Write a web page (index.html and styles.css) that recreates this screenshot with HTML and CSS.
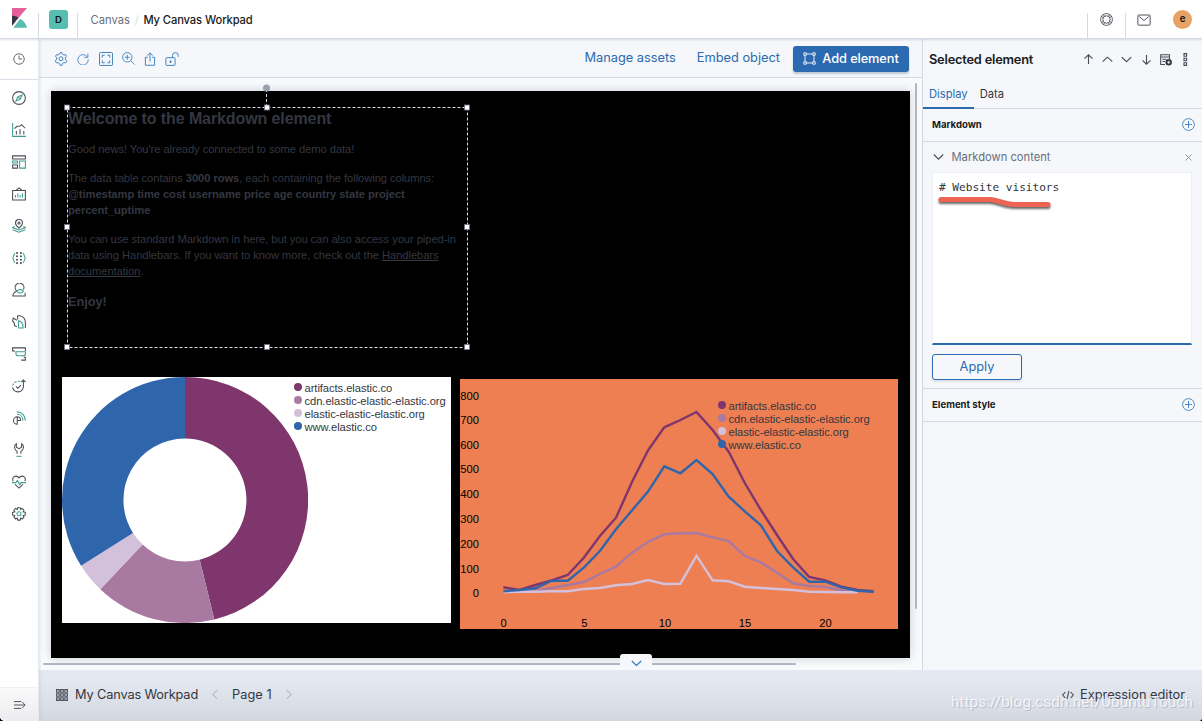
FILE: index.html
```
<!DOCTYPE html>
<html lang="en">

<head>
    <meta charset="UTF-8">
    <title>My Canvas Workpad - Kibana</title>
    <link rel="stylesheet" href="styles.css">
</head>

<body>
    <div class="app">
        <header class="header">
            <a class="logo">
                <svg width="16" height="20" viewBox="0 0 16 20">
                    <path fill="#e5609b" d="M0 0h15L0 17.500z" />
                    <path fill="#343741" d="M0 7.700c2.400 0 4.600.6 6.500 1.800L.4 17.400 0 17.800z" />
                    <path fill="#57bdb1" d="M8.200 10.800L1.300 19.700H15c-.7-3.700-3.400-7-6.800-8.900z" />
                </svg>
            </a>
            <div class="space"><span class="space-badge">D</span></div>
            <nav class="breadcrumbs">
                <span class="crumb">Canvas</span>
                <span class="slash">/</span>
                <span class="crumb current">My Canvas Workpad</span>
            </nav>
            <div class="header-item">
                <svg class="icon" width="13" height="13" viewBox="0 0 16 16">
                    <circle cx="8" cy="8" r="7.300" />
                    <circle cx="8" cy="8" r="4.600" />
                    <path d="M2 4l2.200 2M4 2l2 2.200M14 4l-2.200 2M12 2l-2 2.200M2 12l2.200-2M4 14l2-2.200M14 12l-2.200-2M12 14l-2-2.200" />
                </svg>
            </div>
            <div class="header-item">
                <svg class="icon" width="14" height="12" viewBox="0 0 16 13">
                    <rect x="1" y=".8" width="14" height="11.600" rx="1" />
                    <path d="M2.500 2.500L8 7.200l5.500-4.700" />
                </svg>
            </div>
            <div class="user"><span class="avatar">e</span></div>
        </header>

        <aside class="sidenav">
            <div class="recent">
                <svg class="icon" width="12" height="12" viewBox="0 0 16 16">
                    <circle cx="8" cy="8" r="7" />
                    <path d="M8 3.500V8h4.200" />
                </svg>
            </div>
            <ul class="apps">
                <li>
                    <svg class="icon" viewBox="0 0 16 16">
                        <circle cx="8" cy="8" r="7.300" />
                        <path class="teal" d="M11.500 4.500L9.400 9.400l-4.900 2.100 2.100-4.900zM6.600 6.600l2.800 2.800" />
                    </svg>
                </li>
                <li>
                    <svg class="icon" viewBox="0 0 16 16">
                        <path class="teal" d="M.7 0v15.300H16" />
                        <path d="M2.800 6.500l3-2.700h3L11 2l4 4M5 9v4M9.200 7v6M13.500 9v4" />
                    </svg>
                </li>
                <li>
                    <svg class="icon" viewBox="0 0 16 16">
                        <path d="M.7 1h14.600v3.500H.7zM.7 11.500h5.600v3.500H.7z" />
                        <path class="teal" d="M.7 6.800h5.600v2.400H.7zM8.700 6.800h6.600V15H8.700z" />
                    </svg>
                </li>
                <li>
                    <svg class="icon" viewBox="0 0 16 16">
                        <path d="M.7 4h14.600v10.800H.7zM4.500 4L8 1l3.500 3" />
                        <path class="teal" d="M4 9v3M6.700 7.500V12M9.400 9v3M12 7v5" />
                    </svg>
                </li>
                <li>
                    <svg class="icon" viewBox="0 0 16 16">
                        <path d="M8 10.500C5 8 4 6.400 4 4.600a4 4 0 0 1 8 0c0 1.800-1 3.400-4 5.900z" />
                        <circle cx="8" cy="4.600" r="1.200" />
                        <path class="teal" d="M3 8.600L.6 9.800 8 12.600l7.400-2.800L13 8.600M.8 12.300L8 15.200l7.200-2.900" />
                    </svg>
                </li>
                <li>
                    <svg class="icon" viewBox="0 0 16 16">
                        <path class="teal" d="M3.500 2.500C1.500 3.500 2.500 6 .8 8c1.700 2 .7 4.500 2.700 5.500M12.500 2.500c2 1 1 3.500 2.700 5.500-1.700 2-.7 4.500-2.700 5.500" />
                        <g class="dots">
                            <circle cx="5.800" cy="2.200" r="1.200" /><circle cx="10.200" cy="2.200" r="1.200" />
                            <circle cx="5.800" cy="6" r="1.200" /><circle cx="10.200" cy="6" r="1.200" />
                            <circle cx="5.800" cy="10" r="1.200" /><circle cx="10.200" cy="10" r="1.200" />
                            <circle cx="5.800" cy="13.800" r="1.200" /><circle cx="10.200" cy="13.800" r="1.200" />
                        </g>
                    </svg>
                </li>
                <li>
                    <svg class="icon" viewBox="0 0 16 16">
                        <path d="M5.500 9A5 5 0 1 1 13 7.500M5.300 9.500C2.500 10.500 1.200 12 1 14.800h14V11" />
                        <path class="teal" d="M5.500 9.500c1.800-2.600 6-2.600 7.600 0-1.800 2.600-6 2.600-7.600 0z" />
                    </svg>
                </li>
                <li>
                    <svg class="icon" viewBox="0 0 16 16">
                        <path d="M5.500 13.500L2.800 12V9.500L.7 7 1.500 3.500l4 2.500M6.500 5V.8H9c3.800.8 6.300 4 6.300 8v6" />
                        <path class="teal" d="M7.500 6.500c3 .5 5.200 3.800 5.200 8.300H7.500z" />
                    </svg>
                </li>
                <li>
                    <svg class="icon" viewBox="0 0 16 16">
                        <path d="M3.500 4.500H.7V1h14.600v3.500M10.500 15h4.800v-3.300h-2" />
                        <path class="teal" d="M4.500 5.500h10.800v2.300c0 1.500-1 2.300-2.200 2.300H6.700c-1.200 0-2.200-.8-2.200-2.300z" />
                    </svg>
                </li>
                <li>
                    <svg class="icon" viewBox="0 0 16 16">
                        <path d="M.7 9.500A6.200 6.200 0 0 0 13 9V1.200M10.500 3.600L13 1.100l2.500 2.500M4.500 8.500l2.200 2.200 3.600-3.600" />
                        <path class="teal dashed" d="M.8 7.500A6.400 6.400 0 0 1 9 2.800" />
                    </svg>
                </li>
                <li>
                    <svg class="icon" viewBox="0 0 16 16">
                        <path d="M6 6.500a4.300 4.300 0 1 0 0 8.600zM6 6.500c2.500 0 3.800 1.500 3.800 4.300H6" />
                        <path class="teal" d="M5.500 3.800c4 0 7 3 7 7.400M5.500 1c5.700 0 9.800 4.200 9.800 10.200" />
                    </svg>
                </li>
                <li>
                    <svg class="icon" viewBox="0 0 16 16">
                        <path d="M5.800 12.300V9.500C2.200 7.500 2 2.500 5 .9v4L8 6.500l3-1.600v-4c3 1.600 2.800 6.600-.8 8.600v2.800" />
                        <path class="teal" d="M5 15.200h6" />
                    </svg>
                </li>
                <li>
                    <svg class="icon" viewBox="0 0 16 16">
                        <path d="M1.300 7C-.2 3.500 2 1.300 4.500 1.300 6.300 1.300 7.300 2.300 8 3.300c.7-1 1.700-2 3.500-2 2.500 0 4.700 2.200 3.200 5.700M3.500 10.700L8 15l4.500-4.300" />
                        <path class="teal" d="M0 8.700h4.500L6.200 6l2.600 5.200 1.500-2.500H16" />
                    </svg>
                </li>
                <li>
                    <svg class="icon" viewBox="0 0 16 16">
                        <path d="M6.600.8h2.800l.5 1.900 1.800-1 2 2-1 1.800 2.500.6v3.200l-2.500.5 1 1.900-2 2-1.800-1-.5 2.300H6.600l-.5-2.300-1.900 1-2-2 1-1.900-2.500-.5V6.100l2.500-.6-1-1.800 2-2 1.900 1z" />
                        <circle class="teal" cx="8" cy="7.800" r="2.300" />
                    </svg>
                </li>
            </ul>
            <div class="collapse">
                <svg class="icon" width="12" height="10" viewBox="0 0 14 10">
                    <path d="M0 1h8.500M0 5h13M0 9h8.500M9.500 1.500L13 5 9.500 8.500" />
                </svg>
            </div>
        </aside>

        <main class="workspace">
            <div class="toolbar">
                <div class="tools">
                    <svg class="icon" width="14" height="14" viewBox="0 0 16 16">
                        <path d="M6.300 2.500L7 .7h2l.7 1.800 1.600.9 1.900-.4 1.100 1.900L13 6.300v2l1.500 1.900-1.200 2.200-2-.3-1.600.9L9 15.300H7L6.300 13l-1.600-.9-2 .3-1.200-2.200L3 8.300v-2L1.700 4.900 2.800 3l1.900.4z" />
                        <circle cx="8" cy="7.700" r="2.300" />
                    </svg>
                    <svg class="icon" width="12" height="12" viewBox="0 0 16 16">
                        <path d="M14 5.500A7 7 0 1 0 15 8.500M14.500.8v5H9.500" />
                    </svg>
                    <svg class="icon" width="14" height="14" viewBox="0 0 16 16">
                        <rect x=".6" y=".6" width="14.800" height="14.800" rx="1" />
                        <path d="M3.700 6.500V3.700h2.800M9.500 3.700h2.800v2.800M12.300 9.500v2.800H9.500M6.500 12.300H3.700V9.500" />
                    </svg>
                    <svg class="icon" width="13" height="13" viewBox="0 0 16 16">
                        <circle cx="6.500" cy="6.500" r="5.800" />
                        <path d="M3.500 6.500h6M6.500 3.500v6M10.700 10.700l4.800 4.800" />
                    </svg>
                    <svg class="icon" width="12" height="14" viewBox="0 0 14 16">
                        <path d="M4.500 6H1.600v9.300h10.800V6H9.500M7 11V1M3.800 4L7 .8 10.200 4" />
                    </svg>
                    <svg class="icon" width="14" height="14" viewBox="0 0 16 16">
                        <rect x="1" y="6.500" width="10.500" height="8.800" rx=".8" />
                        <path d="M8.600 6.500V4a3.200 3.200 0 0 1 6.600 0v1.500" />
                        <rect class="solid" x="5.300" y="9.800" width="2" height="2.500" />
                    </svg>
                </div>
                <div class="actions">
                    <a class="link">Manage assets</a>
                    <a class="link">Embed object</a>
                    <button class="add">
                        <svg class="icon" width="13" height="13" viewBox="0 0 16 16">
                            <path d="M1 1h3v3H1zM12 1h3v3h-3zM1 12h3v3H1zM12 12h3v3h-3zM4 2.500h8M4 13.500h8M2.500 4v8M13.500 4v8" />
                        </svg>
                        <span>Add element</span>
                    </button>
                </div>
            </div>

            <div class="stage">
                <div class="workpad">
                    <section class="element markdown">
                        <h1>Welcome to the Markdown element</h1>
                        <p>Good news! You're already connected to some demo data!</p>
                        <p>The data table contains <b>3000 rows</b>, each containing the following columns:
                            <b>@timestamp time cost username price age country state project percent_uptime</b></p>
                        <p>You can use standard Markdown in here, but you can also access your piped-in data using
                            Handlebars. If you want to know more, check out the <a>Handlebars documentation</a>.</p>
                        <h3>Enjoy!</h3>
                    </section>

                    <svg class="selection" width="408" height="270" viewBox="0 0 408 270">
                        <path class="outline" d="M4.500 23.500h400v240h-400zM203.500 23V7" />
                        <circle cx="203.500" cy="4" r="3.500" />
                        <g class="handles">
                            <rect x="1.500" y="21" width="5" height="5" />
                            <rect x="201.500" y="21" width="5" height="5" />
                            <rect x="401.500" y="21" width="5" height="5" />
                            <rect x="1.500" y="140.500" width="5" height="5" />
                            <rect x="401.500" y="140.500" width="5" height="5" />
                            <rect x="1.500" y="260.500" width="5" height="5" />
                            <rect x="201.500" y="260.500" width="5" height="5" />
                            <rect x="401.500" y="260.500" width="5" height="5" />
                        </g>
                    </svg>

                    <section class="element pie">
                        <svg width="246" height="246" viewBox="0 0 246 246">
                            <path fill="#7f366d" d="M123 0A123 123 0 0 1 152.300 242.500L137.700 182.700A61.500 61.500 0 0 0 123 61.500z" />
                            <path fill="#a87aa1" d="M152.300 242.500A123 123 0 0 1 38.300 212.200L80.600 167.600A61.500 61.500 0 0 0 137.700 182.700z" />
                            <path fill="#d3c1dc" d="M38.300 212.200A123 123 0 0 1 19.100 188.800L71 155.900A61.500 61.500 0 0 0 80.600 167.600z" />
                            <path fill="#2f65ab" d="M19.100 188.800A123 123 0 0 1 123 0V61.500A61.500 61.500 0 0 0 71 155.900z" />
                        </svg>
                        <ul class="legend">
                            <li class="c1">artifacts.elastic.co</li>
                            <li class="c2">cdn.elastic-elastic-elastic.org</li>
                            <li class="c3">elastic-elastic-elastic.org</li>
                            <li class="c4">www.elastic.co</li>
                        </ul>
                    </section>

                    <section class="element plot">
                        <svg width="438" height="250" viewBox="0 0 438 250">
                            <g class="ticks-y">
                                <text x="19" y="21">800</text>
                                <text x="19" y="45">700</text>
                                <text x="19" y="70">600</text>
                                <text x="19" y="94">500</text>
                                <text x="19" y="119">400</text>
                                <text x="19" y="144">300</text>
                                <text x="19" y="169">200</text>
                                <text x="19" y="194">100</text>
                                <text x="19" y="218">0</text>
                            </g>
                            <g class="ticks-x">
                                <text x="43.500" y="248">0</text>
                                <text x="124.300" y="248">5</text>
                                <text x="205" y="248">10</text>
                                <text x="285" y="248">15</text>
                                <text x="365.500" y="248">20</text>
                            </g>
                            <g class="lines">
                                <polyline stroke="#7f366d" points="43.300,208.300 59.400,211 75.500,206 91.600,201.300 107.700,196 123.800,178.700 139.900,157 156,138.700 172.100,102.700 188.200,71 204.300,48.300 220.400,41 236.500,33 252.600,51 268.700,72.700 284.800,104 300.900,131 317,156 333.100,180 349.200,198 365.300,201.300 381.400,207.700 397.500,211 413.600,212.300" />
                                <polyline stroke="#a87aa1" points="43.300,213 59.400,212.700 75.500,211.700 91.600,209 107.700,206 123.800,203 139.900,195 156,187.700 172.100,173.700 188.200,162.700 204.300,155.300 220.400,154.300 236.500,154 252.600,158.300 268.700,162 284.800,177 300.900,183.300 317,193.700 333.100,204.300 349.200,207 365.300,208 381.400,211.300 397.500,213" />
                                <polyline stroke="#d3c1dc" points="43.300,213.300 59.400,212.700 75.500,212.700 91.600,212.300 107.700,212.300 123.800,210 139.900,209 156,206.300 172.100,205 188.200,201 204.300,205 220.400,204.700 236.500,176.700 252.600,201.300 268.700,202.300 284.800,207.700 300.900,209 317,210 333.100,211 349.200,212.700 365.300,213 381.400,213.300 397.500,213.300" />
                                <polyline stroke="#2f65ab" points="43.300,212.300 59.400,211 75.500,209.300 91.600,201.700 107.700,201.700 123.800,188.700 139.900,172 156,150.300 172.100,131.300 188.200,112.300 204.300,87.300 220.400,94.300 236.500,81 252.600,95 268.700,117.700 284.800,132.300 300.900,146.300 317,172 333.100,188.300 349.200,202.700 365.300,202.700 381.400,208.300 397.500,211.700 413.600,212.700" />
                            </g>
                        </svg>
                        <ul class="legend">
                            <li class="c1">artifacts.elastic.co</li>
                            <li class="c2">cdn.elastic-elastic-elastic.org</li>
                            <li class="c3">elastic-elastic-elastic.org</li>
                            <li class="c4">www.elastic.co</li>
                        </ul>
                    </section>
                </div>
                <div class="scroll-y"></div>
                <div class="scroll-x"></div>
                <div class="tray-toggle">
                    <svg class="icon" width="11" height="7" viewBox="0 0 11 7"><path d="M.8 1l4.700 4.500L10.200 1" /></svg>
                </div>
            </div>
        </main>

        <aside class="sidebar">
            <div class="sidebar-head">
                <h2>Selected element</h2>
                <div class="order">
                    <svg class="icon" width="11" height="11" viewBox="0 0 11 11"><path d="M5.500 10V1M1.500 4.700l4-3.900 4 3.900" /></svg>
                    <svg class="icon" width="11" height="11" viewBox="0 0 11 11"><path d="M.7 7.700l4.800-4.500 4.800 4.500" /></svg>
                    <svg class="icon" width="11" height="11" viewBox="0 0 11 11"><path d="M.7 3.200l4.800 4.500 4.800-4.500" /></svg>
                    <svg class="icon" width="11" height="11" viewBox="0 0 11 11"><path d="M5.500 1v9M1.500 6.300l4 3.900 4-3.900" /></svg>
                    <svg class="icon" width="12" height="12" viewBox="0 0 12 12">
                        <path d="M9.500 5V.7H.7v9.800H5M.7 3h8.800M2.500 5.200h4M2.500 7.500h2.500" />
                        <circle class="solid" cx="8.700" cy="8.300" r="3.200" />
                        <path class="cross" d="M8.700 6.700v3.200M7.100 8.300h3.200" />
                    </svg>
                    <svg class="icon dots-menu" width="5" height="13" viewBox="0 0 5 13"><path d="M1 .6h2.600v2.600H1zM1 5.200h2.600v2.600H1zM1 9.800h2.600v2.600H1z" /></svg>
                </div>
            </div>
            <div class="tabs">
                <span class="tab active">Display</span>
                <span class="tab">Data</span>
            </div>
            <div class="group-title">
                <h4>Markdown</h4>
                <svg class="icon plus" width="13" height="13" viewBox="0 0 13 13"><circle cx="6.500" cy="6.500" r="5.900" /><path d="M6.500 3v7M3 6.500h7" /></svg>
            </div>
            <div class="content">
                <div class="content-title">
                    <svg class="icon" width="11" height="8" viewBox="0 0 11 8"><path d="M.8 1.500l4.700 4.700 4.700-4.700" /></svg>
                    <span>Markdown content</span>
                    <svg class="icon close" width="7" height="7" viewBox="0 0 7 7"><path d="M.5.500l6 6M6.500.500l-6 6" /></svg>
                </div>
                <div class="editor"># Website visitors
                    <svg class="scribble" width="120" height="20" viewBox="0 0 120 20">
                        <path d="M5 5.500H54C63 6 68 10.500 78 10.500H112" />
                    </svg>
                </div>
                <button class="apply">Apply</button>
            </div>
            <div class="group-title">
                <h4>Element style</h4>
                <svg class="icon plus" width="13" height="13" viewBox="0 0 13 13"><circle cx="6.500" cy="6.500" r="5.900" /><path d="M6.500 3v7M3 6.500h7" /></svg>
            </div>
        </aside>

        <footer class="footer">
            <svg class="icon" width="12" height="12" viewBox="0 0 12 12">
                <path d="M.6.600h2.600v2.600H.6zM4.700.600h2.600v2.600H4.700zM8.800.600h2.600v2.600H8.800zM.6 4.700h2.600v2.600H.6zM4.700 4.700h2.600v2.600H4.700zM8.800 4.700h2.600v2.600H8.800zM.6 8.800h2.600v2.600H.6zM4.700 8.800h2.600v2.600H4.700zM8.800 8.800h2.600v2.600H8.800z" />
            </svg>
            <span class="pad-name">My Canvas Workpad</span>
            <svg class="icon pager" width="6" height="11" viewBox="0 0 6 11"><path d="M5.300.8L.8 5.500l4.500 4.700" /></svg>
            <span class="page-no">Page 1</span>
            <svg class="icon pager" width="6" height="11" viewBox="0 0 6 11"><path d="M.7.800l4.500 4.700-4.500 4.700" /></svg>
            <div class="expression">
                <svg class="icon" width="12" height="10" viewBox="0 0 12 10"><path d="M3.300 2L.7 5l2.600 3M8.700 2l2.600 3-2.600 3M7 .8L5 9.200" /></svg>
                <span>Expression editor</span>
            </div>
            <span class="watermark">https://blog.csdn.net/UbuntuTouch</span>
        </footer>
    </div>
</body>

</html>
```
FILE: styles.css
```
* {
    box-sizing: border-box;
}

body {
    margin: 0;
    background: #000;
    color: #343741;
    font-family: Inter, sans-serif;
    font-size: 11.2px;
}

h1,
h2,
h3,
h4,
p,
ul {
    margin: 0;
    padding: 0;
}

ul {
    list-style: none;
}

button {
    font-family: inherit;
    padding: 0;
}

.app {
    display: grid;
    grid-template-columns: 39px 1fr 280px;
    grid-template-rows: 39px 1fr 51px;
    height: 721px;
    overflow: hidden;
    background: #fafbfd;
    border-radius: 0 0 4px 5px;
}

.icon {
    display: block;
    flex: none;
    fill: none;
    stroke: #4a4d57;
    stroke-width: 1.1;
}

.icon .teal {
    stroke: #3f9c92;
}

.icon .solid {
    fill: currentColor;
    stroke: none;
}

/* header */
.header {
    grid-column: 1 / -1;
    display: flex;
    align-items: stretch;
    background: #fff;
    border-bottom: 1px solid #d3dae6;
    box-shadow: 0 1px 2px rgba(152, 162, 179, 0.35);
    position: relative;
    z-index: 2;
}

.logo {
    width: 38px;
    padding: 8px 0 0 12px;
}

.space {
    width: 40px;
    margin-top: 13px;
    border-left: 1px solid #d3dae6;
    border-right: 1px solid #d3dae6;
}

.space-badge {
    display: block;
    width: 19px;
    height: 19px;
    margin: -3px 0 0 10px;
    border-radius: 3px;
    background: #57bdb1;
    color: #111;
    font-size: 9.6px;
    font-weight: 600;
    line-height: 19px;
    text-align: center;
}

.breadcrumbs {
    flex: 1;
    display: flex;
    align-items: center;
    padding: 1px 0 0 12.5px;
}

.crumb {
    color: #69707d;
}

.crumb.current {
    color: #1a1c21;
    font-weight: 500;
    letter-spacing: -0.1px;
}

.slash {
    margin: 0 4.5px 0 5px;
    color: #d3dae6;
}

.header-item {
    display: flex;
    align-items: center;
    justify-content: center;
    width: 38px;
    margin-top: 13px;
    padding: 0 1px 12px 0;
    border-left: 1px solid #d3dae6;
}

.user {
    display: flex;
    align-items: center;
    width: 39px;
    padding: 1px 0 0 10px;
}

.avatar {
    width: 19px;
    height: 19px;
    border-radius: 50%;
    background: #e7a366;
    color: #111;
    font-size: 9.6px;
    font-weight: 600;
    line-height: 18px;
    text-align: center;
}

/* side navigation */
.sidenav {
    grid-row: 2 / 4;
    display: flex;
    flex-direction: column;
    background: #fff;
    border-right: 1px solid #e4e8f0;
    box-shadow: 1px 0 3px rgba(152, 162, 179, 0.25);
    position: relative;
    z-index: 1;
}

.recent {
    display: flex;
    align-items: center;
    justify-content: center;
    height: 41px;
    border-bottom: 1px solid #d9dfe9;
}

.apps {
    flex: 1;
    padding-top: 2px;
}

.apps li {
    display: flex;
    align-items: center;
    justify-content: center;
    height: 32px;
}

.apps .icon {
    width: 14px;
    height: 14px;
    stroke-width: 1.2;
}

.dots circle {
    fill: #4a4d57;
    stroke: none;
}

.dashed {
    stroke-dasharray: 2.5 1.5;
}

.collapse {
    display: flex;
    align-items: center;
    justify-content: center;
    height: 34px;
    padding-left: 1px;
    background: linear-gradient(#fafafb, #ececee);
    border-top: 1px solid #f0f1f4;
}

/* workspace */
.workspace {
    display: flex;
    flex-direction: column;
    min-width: 0;
}

.toolbar {
    display: flex;
    align-items: center;
    justify-content: space-between;
    height: 39px;
    padding: 1px 13px 0 15px;
    background: #f5f7fa;
    border-bottom: 1px solid #d3dae6;
}

.tools {
    display: flex;
    align-items: center;
    gap: 9.3px;
    color: #2f70b3;
}

.tools .icon {
    stroke: #3b80c0;
}

.actions {
    display: flex;
    align-items: center;
    font-size: 12.8px;
}

.link {
    margin: -2px 21px 0 0;
    color: #2a6bb0;
}

.link + .add {
    margin-left: -8px;
}

.add {
    display: flex;
    align-items: center;
    justify-content: center;
    gap: 6px;
    width: 116px;
    height: 26px;
    border: 0;
    border-radius: 3px;
    background: #2b69b0;
    box-shadow: 0 2px 2px rgba(54, 97, 126, 0.3);
    color: #fff;
    font-size: 12.8px;
    font-weight: 500;
    letter-spacing: -0.1px;
}

.add .icon {
    stroke: #fff;
}

.stage {
    flex: 1;
    position: relative;
    padding: 13px 0 0 12px;
}

.workpad {
    position: relative;
    width: 859px;
    height: 567px;
    background: #000;
    box-shadow: 0 0 10px rgba(152, 162, 179, 0.5);
    font-family: "Liberation Sans", Arial, sans-serif;
}

.element {
    position: absolute;
}

.markdown {
    left: 17px;
    top: 17px;
    width: 400px;
    height: 240px;
    color: #343741;
    font-size: 11.2px;
    line-height: 16px;
    letter-spacing: -0.07px;
}

.markdown h1 {
    margin-bottom: 11px;
    font-size: 16px;
    line-height: 22px;
    letter-spacing: -0.1px;
}

.markdown p {
    margin-bottom: 13px;
}

.markdown h3 {
    font-size: 12.8px;
    line-height: 20px;
}

.markdown a {
    text-decoration: underline;
}

.selection {
    position: absolute;
    left: 12px;
    top: -7px;
}

.selection .outline {
    fill: none;
    stroke: #d8dbe2;
    stroke-dasharray: 3 2;
}

.selection circle {
    fill: #98a2b3;
}

.handles rect {
    fill: #fff;
    stroke: #69707d;
    stroke-width: 0.8;
}

.pie {
    left: 11px;
    top: 286px;
    width: 389px;
    height: 246px;
    background: #fff;
}

.plot {
    left: 409px;
    top: 288px;
    width: 438px;
    height: 250px;
    background: #ee7f52;
}

.plot text {
    fill: #000;
    font-size: 11.2px;
}

.ticks-y {
    text-anchor: end;
}

.ticks-x {
    text-anchor: middle;
}

.lines {
    fill: none;
    stroke-width: 2.4;
}

.legend {
    position: absolute;
    left: 232px;
    top: 5px;
    font-size: 11.2px;
    line-height: 13px;
    letter-spacing: -0.06px;
}

.plot .legend {
    left: 258px;
    top: 21px;
}

.legend li {
    display: flex;
    gap: 2.5px;
}

.legend li::before {
    content: "";
    width: 8px;
    height: 8px;
    margin-top: 1px;
    border-radius: 50%;
}

.legend .c1::before {
    background: #7f366d;
}

.legend .c2::before {
    background: #a87aa1;
}

.legend .c3::before {
    background: #d3c1dc;
}

.legend .c4::before {
    background: #2f65ab;
}

.scroll-y,
.scroll-x {
    position: absolute;
    background: #b4b6bf;
    border-radius: 1px;
}

.scroll-y {
    right: 5px;
    top: 5px;
    width: 2px;
    height: 526px;
}

.scroll-x {
    left: 4px;
    bottom: 5px;
    width: 753px;
    height: 2px;
}

.tray-toggle {
    position: absolute;
    left: 581px;
    bottom: 0;
    display: flex;
    align-items: center;
    justify-content: center;
    width: 32px;
    height: 16px;
    padding-top: 3px;
    background: #f5f7fa;
    border-radius: 3px 3px 0 0;
}

.tray-toggle .icon {
    stroke: #2f76bd;
}

/* element sidebar */
.sidebar {
    background: #f5f7fa;
    border-left: 1px solid #d3dae6;
}

.sidebar-head {
    display: flex;
    align-items: center;
    justify-content: space-between;
    height: 41px;
    padding: 0 14px 0 6px;
}

.sidebar-head h2 {
    color: #1a1c21;
    font-size: 12.8px;
    font-weight: 600;
    letter-spacing: -0.2px;
}

.order {
    display: flex;
    align-items: center;
    gap: 8.2px;
}

.dots-menu {
    margin-left: 3px;
}

.cross {
    stroke: #fff;
    stroke-width: 0.8;
}

.tabs {
    display: flex;
    height: 29px;
    border-bottom: 1px solid #d3dae6;
}

.tab {
    height: 29px;
    padding: 0 6px;
    line-height: 29px;
}

.tab.active {
    color: #2a6bb0;
    border-bottom: 2px solid #2a6bb0;
}

.group-title {
    display: flex;
    align-items: center;
    justify-content: space-between;
    height: 33px;
    padding: 0 7px 1px 9px;
    border-bottom: 1px solid #d3dae6;
}

.group-title h4 {
    color: #1a1c21;
    font-size: 9.6px;
    font-weight: 700;
}

.plus {
    stroke: #3b80c0;
    stroke-width: 0.9;
}

.content {
    height: 247px;
    padding: 0 10px 0 9px;
    border-bottom: 1px solid #d3dae6;
}

.content-title {
    display: flex;
    align-items: center;
    gap: 7.500px;
    height: 30px;
    padding-left: 1px;
    color: #69707d;
}

.close {
    margin: 0 0 0 auto;
    stroke: #8a909c;
    stroke-width: 0.9;
}

.editor {
    position: relative;
    height: 173px;
    padding: 7px 6px;
    background: #fff;
    border: 1px solid #eceff5;
    border-bottom: 2px solid #2a6bb0;
    font-family: "DejaVu Sans Mono", monospace;
    font-size: 11.1px;
    line-height: 15px;
}

.scribble {
    position: absolute;
    left: 3px;
    top: 21px;
    fill: none;
    stroke: #ee6352;
    stroke-width: 5;
    stroke-linecap: round;
    filter: drop-shadow(0 2px 1px rgba(0, 0, 0, 0.6));
}

.apply {
    display: block;
    width: 90px;
    height: 26px;
    margin-top: 9px;
    padding-bottom: 1px;
    background: #f5f7fa;
    border: 1px solid #2a6bb0;
    border-radius: 3px;
    box-shadow: 0 2px 2px rgba(152, 162, 179, 0.25);
    color: #2a6bb0;
    font-size: 12.8px;
}

/* bottom bar */
.footer {
    grid-column: 2 / -1;
    position: relative;
    display: flex;
    align-items: center;
    padding: 0 17px 2px;
    background: linear-gradient(#e4e8f1 20%, #d3d7df);
    font-size: 12.8px;
}

.pad-name {
    margin: 0 14px 0 7px;
    letter-spacing: -0.15px;
}

.page-no {
    margin: 0 14px;
}

.pager {
    stroke: #b7bcc8;
}

.expression {
    display: flex;
    align-items: center;
    gap: 6px;
    margin-left: auto;
}

.watermark {
    position: absolute;
    right: 9px;
    top: 23px;
    color: rgba(255, 255, 255, 0.75);
    font-family: Roboto, sans-serif;
    font-size: 15.5px;
    line-height: 18px;
    text-shadow: 1px 1px 0 rgba(150, 155, 165, 0.5);
}
```
